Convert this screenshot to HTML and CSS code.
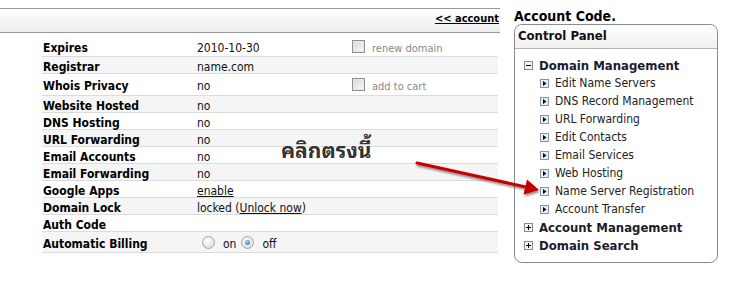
FILE: index.html
```html
<!DOCTYPE html>
<html>
<head>
<meta charset="utf-8">
<link rel="stylesheet" href="styles.css">
</head>
<body>
<div class="page">
  <div class="main">
    <div class="topbar"><a class="back" href="#">&lt;&lt; account</a></div>
    <div class="table">
      <div class="row h20"><div class="lbl">Expires</div><div class="val">2010-10-30</div><div class="opt"><span class="cb"></span>renew domain</div></div>
      <div class="row alt"><div class="lbl">Registrar</div><div class="val">name.com</div></div>
      <div class="row h22"><div class="lbl">Whois Privacy</div><div class="val">no</div><div class="opt"><span class="cb"></span>add to cart</div></div>
      <div class="row alt"><div class="lbl">Website Hosted</div><div class="val">no</div></div>
      <div class="row"><div class="lbl">DNS Hosting</div><div class="val">no</div></div>
      <div class="row alt"><div class="lbl">URL Forwarding</div><div class="val">no</div></div>
      <div class="row"><div class="lbl">Email Accounts</div><div class="val">no</div></div>
      <div class="row alt"><div class="lbl">Email Forwarding</div><div class="val">no</div></div>
      <div class="row"><div class="lbl">Google Apps</div><div class="val"><a href="#">enable</a></div></div>
      <div class="row alt"><div class="lbl">Domain Lock</div><div class="val">locked (<a href="#">Unlock now</a>)</div></div>
      <div class="row"><div class="lbl">Auth Code</div><div class="val"></div></div>
      <div class="row alt h21"><div class="lbl">Automatic Billing</div><div class="val radios"><span class="rd"></span><span class="rl">on</span><span class="rd on"></span><span class="rl">off</span></div></div>
    </div>
  </div>
  <aside class="side">
    <div class="acct">Account Code.</div>
    <div class="panel">
      <div class="panel-hd">Control Panel</div>
      <ul class="tree">
        <li class="grp"><svg class="ic" width="9" height="9" viewBox="0 0 9 9"><rect x="0.5" y="0.5" width="8" height="8" fill="#f4f4f4" stroke="#8a8a8a"/><path d="M2 4.5h5" stroke="#000" stroke-width="1"/></svg>Domain Management</li>
        <li class="sub"><svg class="ic" width="9" height="9" viewBox="0 0 9 9"><rect x="0.5" y="0.5" width="8" height="8" fill="#e8eef6" stroke="#8097b2"/><path d="M3 2v5l3.5-2.5z" fill="#000"/></svg>Edit Name Servers</li>
        <li class="sub"><svg class="ic" width="9" height="9" viewBox="0 0 9 9"><rect x="0.5" y="0.5" width="8" height="8" fill="#e8eef6" stroke="#8097b2"/><path d="M3 2v5l3.5-2.5z" fill="#000"/></svg>DNS Record Management</li>
        <li class="sub"><svg class="ic" width="9" height="9" viewBox="0 0 9 9"><rect x="0.5" y="0.5" width="8" height="8" fill="#e8eef6" stroke="#8097b2"/><path d="M3 2v5l3.5-2.5z" fill="#000"/></svg>URL Forwarding</li>
        <li class="sub"><svg class="ic" width="9" height="9" viewBox="0 0 9 9"><rect x="0.5" y="0.5" width="8" height="8" fill="#e8eef6" stroke="#8097b2"/><path d="M3 2v5l3.5-2.5z" fill="#000"/></svg>Edit Contacts</li>
        <li class="sub"><svg class="ic" width="9" height="9" viewBox="0 0 9 9"><rect x="0.5" y="0.5" width="8" height="8" fill="#e8eef6" stroke="#8097b2"/><path d="M3 2v5l3.5-2.5z" fill="#000"/></svg>Email Services</li>
        <li class="sub"><svg class="ic" width="9" height="9" viewBox="0 0 9 9"><rect x="0.5" y="0.5" width="8" height="8" fill="#e8eef6" stroke="#8097b2"/><path d="M3 2v5l3.5-2.5z" fill="#000"/></svg>Web Hosting</li>
        <li class="sub"><svg class="ic" width="9" height="9" viewBox="0 0 9 9"><rect x="0.5" y="0.5" width="8" height="8" fill="#e8eef6" stroke="#8097b2"/><path d="M3 2v5l3.5-2.5z" fill="#000"/></svg>Name Server Registration</li>
        <li class="sub"><svg class="ic" width="9" height="9" viewBox="0 0 9 9"><rect x="0.5" y="0.5" width="8" height="8" fill="#e8eef6" stroke="#8097b2"/><path d="M3 2v5l3.5-2.5z" fill="#000"/></svg>Account Transfer</li>
        <li class="grp"><svg class="ic" width="9" height="9" viewBox="0 0 9 9"><rect x="0.5" y="0.5" width="8" height="8" fill="#f4f4f4" stroke="#8a8a8a"/><path d="M2 4.5h5M4.5 2v5" stroke="#000" stroke-width="1"/></svg>Account Management</li>
        <li class="grp"><svg class="ic" width="9" height="9" viewBox="0 0 9 9"><rect x="0.5" y="0.5" width="8" height="8" fill="#f4f4f4" stroke="#8a8a8a"/><path d="M2 4.5h5M4.5 2v5" stroke="#000" stroke-width="1"/></svg>Domain Search</li>
      </ul>
    </div>
  </aside>
  <div class="note">คลิกตรงนี้</div>
  <svg class="arrow" width="140" height="50" viewBox="0 0 140 50">
    <defs>
      <filter id="sh" x="-10%" y="-30%" width="120%" height="180%">
        <feGaussianBlur in="SourceAlpha" stdDeviation="1.2"/>
        <feOffset dx="1" dy="2" result="b"/>
        <feComponentTransfer><feFuncA type="linear" slope="0.45"/></feComponentTransfer>
        <feMerge><feMergeNode/><feMergeNode in="SourceGraphic"/></feMerge>
      </filter>
    </defs>
    <g filter="url(#sh)">
      <path d="M7 8L116 32" stroke="#c40000" stroke-width="3" stroke-linecap="round"/>
      <path d="M129 35L113.5 39.5L117 24.5Z" fill="#c40000"/>
    </g>
  </svg>
</div>
</body>
</html>
```
FILE: styles.css
```css
html, body {
  margin: 0;
  padding: 0;
  background: #fff;
}
body {
  font-family: Tahoma, "DejaVu Sans Condensed", "DejaVu Sans", sans-serif;
  font-stretch: condensed;
  color: #000;
}
.page {
  position: relative;
  display: flex;
  width: 732px;
  height: 282px;
  overflow: hidden;
}
.main {
  width: 500px;
  padding-top: 8px;
}
.topbar {
  height: 23px;
  border-top: 1px solid #9a9a9a;
  border-bottom: 1px solid #9a9a9a;
  background: linear-gradient(#ffffff, #ececec);
  display: flex;
  justify-content: flex-end;
  align-items: center;
  padding-right: 1px;
}
.back {
  font-size: 11px;
  font-weight: bold;
  color: #000;
  text-decoration: underline;
  margin-top: -4px;
}
.table {
  margin: 4px 2px 0 42px;
}
.row {
  display: flex;
  align-items: center;
  height: 17px;
  box-sizing: border-box;
  padding-top: 3px;
  border-bottom: 1px solid #dcdcdc;
  font-size: 12px;
}
.row.alt { background: #f5f5f5; }
.row.h20 { height: 20px; }
.row.h22 { height: 22px; }
.row.h21 { height: 21px; }
.lbl {
  width: 155px;
  padding-left: 1px;
  box-sizing: border-box;
  font-weight: bold;
  font-size: 12px;
  color: #000;
}
.val {
  width: 155px;
  color: #111;
}
.val a { color: #111; text-decoration: underline; }
.opt {
  display: flex;
  align-items: center;
  font-size: 11px;
  color: #8a8a8a;
}
.cb {
  width: 11px;
  height: 11px;
  border: 1px solid #8f8f8f;
  background: linear-gradient(135deg, #d8d8d8, #f8f8f8);
  box-shadow: inset 0 0 0 1px #e9e9e9;
  margin-right: 7px;
  margin-top: -4px;
}
.radios {
  display: flex;
  align-items: center;
  padding-left: 5px;
  box-sizing: border-box;
}
.rd {
  width: 11px;
  height: 11px;
  border-radius: 50%;
  border: 1px solid #a5a5a5;
  background: radial-gradient(circle at 40% 35%, #ffffff, #d4d4d4);
  position: relative;
  margin-top: -2px;
}
.rd.on::after {
  content: "";
  position: absolute;
  left: 3px;
  top: 3px;
  width: 5px;
  height: 5px;
  border-radius: 50%;
  background: radial-gradient(circle at 40% 35%, #9fd2ff, #1a63b8);
}
.rl {
  margin: 0 5px 0 8px;
  color: #111;
}
.side {
  width: 204px;
  margin-left: 14px;
}
.acct {
  font-size: 14px;
  font-weight: bold;
  color: #000;
  margin-top: 8px;
  height: 16px;
  line-height: 16px;
}
.panel {
  border: 1px solid #8a8a8a;
  border-radius: 8px;
  height: 239px;
  box-sizing: border-box;
}
.panel-hd {
  height: 23px;
  line-height: 21px;
  padding-left: 3px;
  font-size: 13px;
  font-weight: bold;
  color: #111;
  border-bottom: 1px solid #b5b5b5;
  border-radius: 8px 8px 0 0;
  background: linear-gradient(#ffffff, #f0f0f0);
}
.tree {
  list-style: none;
  margin: 0;
  padding: 7px 0 0 9px;
}
.tree li {
  display: flex;
  align-items: center;
  height: 18px;
  white-space: nowrap;
}
.ic { flex: none; }
.grp {
  font-size: 13px;
  font-weight: bold;
  color: #1c1c2c;
}
.grp .ic { margin-right: 6px; }
.sub {
  font-size: 12px;
  color: #222;
  padding-left: 16px;
}
.sub .ic { margin-right: 6px; }
.note {
  position: absolute;
  left: 281px;
  top: 132px;
  font-size: 21px;
  font-weight: bold;
  color: #333;
  font-family: Tahoma, "Noto Sans Thai Looped", "Noto Serif Thai", "Loma", "Garuda", "Noto Sans Thai", sans-serif;
}
.arrow {
  position: absolute;
  left: 410px;
  top: 155px;
}
```
